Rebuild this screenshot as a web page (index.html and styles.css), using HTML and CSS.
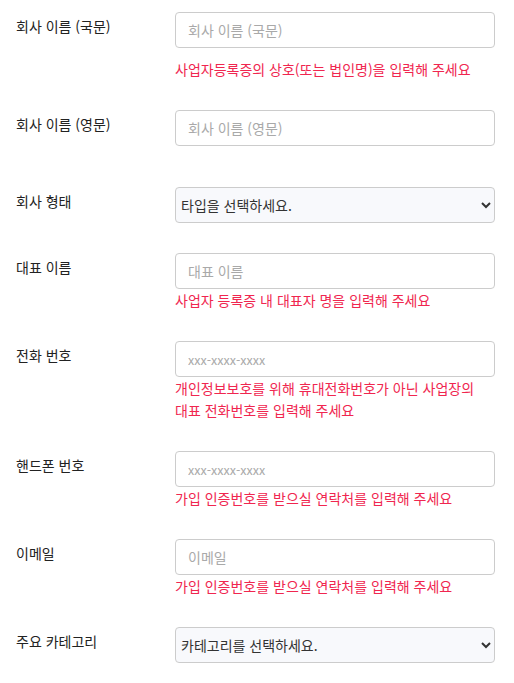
FILE: index.html
```html
<!DOCTYPE html>
<html lang="ko">
<head>
<meta charset="utf-8">
<link rel="stylesheet" href="styles.css">
</head>
<body>
<form class="form">
  <div class="row">
    <label class="label">회사 이름 (국문)</label>
    <div class="field">
      <input class="input" type="text" placeholder="회사 이름 (국문)">
      <p class="help help-spaced">사업자등록증의 상호(또는 법인명)을 입력해 주세요</p>
    </div>
  </div>
  <div class="row row-extra">
    <label class="label">회사 이름 (영문)</label>
    <div class="field">
      <input class="input" type="text" placeholder="회사 이름 (영문)">
    </div>
  </div>
  <div class="row">
    <label class="label">회사 형태</label>
    <div class="field">
      <select class="select"><option>타입을 선택하세요.</option></select>
    </div>
  </div>
  <div class="row">
    <label class="label">대표 이름</label>
    <div class="field">
      <input class="input" type="text" placeholder="대표 이름">
      <p class="help">사업자 등록증 내 대표자 명을 입력해 주세요</p>
    </div>
  </div>
  <div class="row">
    <label class="label">전화 번호</label>
    <div class="field">
      <input class="input input-tel" type="text" placeholder="xxx-xxxx-xxxx">
      <p class="help">개인정보보호를 위해 휴대전화번호가 아닌 사업장의<br>대표 전화번호를 입력해 주세요</p>
    </div>
  </div>
  <div class="row">
    <label class="label">핸드폰 번호</label>
    <div class="field">
      <input class="input input-tel" type="text" placeholder="xxx-xxxx-xxxx">
      <p class="help">가입 인증번호를 받으실 연락처를 입력해 주세요</p>
    </div>
  </div>
  <div class="row">
    <label class="label">이메일</label>
    <div class="field">
      <input class="input" type="text" placeholder="이메일">
      <p class="help">가입 인증번호를 받으실 연락처를 입력해 주세요</p>
    </div>
  </div>
  <div class="row">
    <label class="label">주요 카테고리</label>
    <div class="field">
      <select class="select"><option>카테고리를 선택하세요.</option></select>
    </div>
  </div>
</form>
</body>
</html>
```
FILE: styles.css
```css
* { box-sizing: border-box; }
html, body {
  margin: 0;
  background: #fff;
}
body {
  font-family: "Noto Sans CJK KR", "Liberation Sans", sans-serif;
  font-size: 14px;
  color: #222;
}
.form {
  display: flex;
  flex-direction: column;
  gap: 30px;
  padding: 12px 19px 20px 16px;
}
.row {
  display: grid;
  grid-template-columns: 159px 1fr;
}
.row-extra {
  padding-bottom: 11px;
}
.label {
  padding-top: 4px;
  line-height: 21px;
  font-size: 14px;
  color: #222;
}
.field {
  display: flex;
  flex-direction: column;
}
.input {
  height: 36px;
  width: 100%;
  border: 1px solid #cccccc;
  border-radius: 4px;
  padding: 0 12px;
  font-family: inherit;
  font-size: 14px;
  color: #333;
  background: #fff;
  outline: none;
}
.input-tel {
  font-size: 12.5px;
}
.input::placeholder {
  color: #a9a9a9;
}
.select {
  height: 36px;
  width: 100%;
  border: 1px solid #cccccc;
  border-radius: 4px;
  padding: 0 0 0 1px;
  font-family: inherit;
  font-size: 14px;
  color: #333;
  background-color: #f8f9fc;
}
.help {
  margin: 0;
  line-height: 22px;
  font-size: 14px;
  color: #f0264f;
}
.help-spaced {
  margin-top: 10px;
}
```
